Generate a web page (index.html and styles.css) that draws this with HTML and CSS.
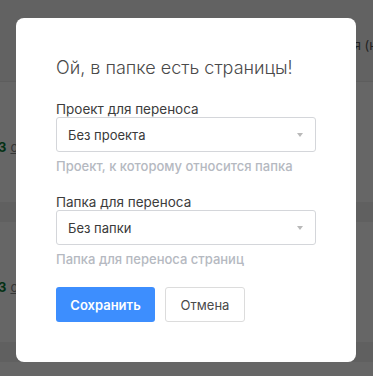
FILE: index.html
```html
<!DOCTYPE html>
<html lang="ru">
<head>
  <meta charset="UTF-8">
  <title>Перенос страниц</title>
  <link rel="stylesheet" href="styles.css">
</head>
<body>
  <!-- страница под оверлеем -->
  <div class="page">
    <div class="page-head"><span class="head-note">я (н</span></div>
    <div class="page-row"><span class="count">3</span> <span class="link">о</span></div>
    <div class="page-sep"></div>
    <div class="page-row"><span class="count">3</span> <span class="link">о</span></div>
    <div class="page-sep"></div>
  </div>

  <div class="overlay">
    <div class="modal">
      <h2 class="modal-title">Ой, в папке есть страницы!</h2>

      <div class="field">
        <label class="field-label">Проект для переноса</label>
        <div class="select">Без проекта<span class="caret"></span></div>
        <div class="field-help">Проект, к которому относится папка</div>
      </div>

      <div class="field">
        <label class="field-label">Папка для переноса</label>
        <div class="select">Без папки<span class="caret"></span></div>
        <div class="field-help">Папка для переноса страниц</div>
      </div>

      <div class="actions">
        <button class="btn btn-primary">Сохранить</button>
        <button class="btn btn-default">Отмена</button>
      </div>
    </div>
  </div>
</body>
</html>
```

FILE: styles.css
```css
body {
  margin: 0;
  font-family: Inter, "Noto Sans", sans-serif;
  background-color: #fff;
  height: 376px;
  overflow: hidden;
}
.page {
  display: flex;
  flex-direction: column;
}
.page-head {
  height: 82px;
  background-color: #f5f5f5;
  border-bottom: 1px solid #e8e8e8;
  display: flex;
  justify-content: flex-end;
  align-items: flex-start;
  padding-top: 37px;
  box-sizing: border-box;
}
.head-note {
  font-size: 13px;
  color: #555;
  margin-right: -4px;
}
.page-row {
  height: 120px;
  display: flex;
  align-items: flex-end;
  padding-bottom: 47px;
  box-sizing: border-box;
  font-size: 13px;
}
.count {
  color: #0a7a35;
  font-weight: 700;
  margin-left: -2px;
}
.link {
  color: #888;
  text-decoration: underline;
  margin-left: 4px;
}
.page-sep {
  height: 20px;
  background-color: #f0f0f0;
}
.overlay {
  position: fixed;
  top: 0;
  left: 0;
  width: 100%;
  height: 100%;
  background-color: rgba(0, 0, 0, 0.6);
}
.modal {
  position: absolute;
  top: 18px;
  left: 16px;
  width: 340px;
  height: 344px;
  box-sizing: border-box;
  background-color: #fff;
  border-radius: 8px;
  padding: 38px 40px 0 40px;
}
.modal-title {
  margin: 0 0 21px 0;
  font-size: 18px;
  font-weight: 300;
  color: #4a4a4a;
  line-height: 24px;
}
.field {
  margin-bottom: 20px;
}
.field-label {
  display: block;
  font-size: 13.5px;
  color: #3c3c3c;
  line-height: 16px;
  margin-bottom: 0;
}
.select {
  position: relative;
  height: 35px;
  box-sizing: border-box;
  border: 1px solid #d4d6da;
  border-radius: 3px;
  padding: 0 11px;
  display: flex;
  align-items: center;
  font-size: 13px;
  color: #3a3a3a;
}
.caret {
  position: absolute;
  right: 12px;
  top: 15px;
  width: 0;
  height: 0;
  border-left: 3px solid transparent;
  border-right: 3px solid transparent;
  border-top: 4px solid #b9b9b9;
}
.field-help {
  margin-top: 6px;
  font-size: 13px;
  font-weight: 500;
  color: #b5b9c1;
  line-height: 16px;
}
.actions {
  display: flex;
  gap: 10px;
  margin-top: 18px;
}
.btn {
  height: 35px;
  border-radius: 3px;
  font-family: inherit;
  font-size: 13px;
  cursor: pointer;
}
.btn-primary {
  width: 99px;
  background-color: #3d8efe;
  color: #fff;
  font-weight: 600;
  border: none;
}
.btn-default {
  width: 80px;
  background-color: #fff;
  color: #4a4a4a;
  border: 1px solid #dcdcdc;
}
```
